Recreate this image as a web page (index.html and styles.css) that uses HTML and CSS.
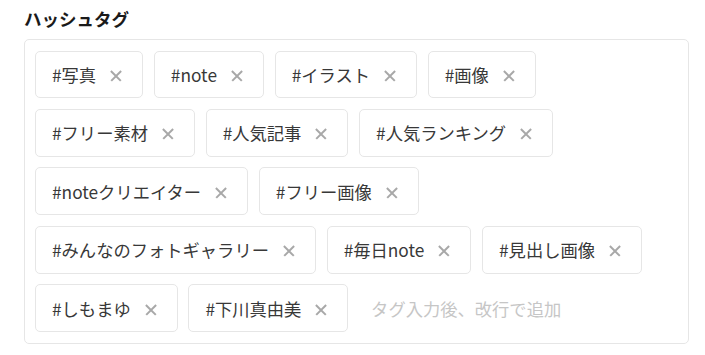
FILE: index.html
```html
<!DOCTYPE html>
<html lang="ja">
<head>
<meta charset="utf-8">
<link rel="stylesheet" href="styles.css">
</head>
<body>
<section class="field">
  <h2 class="field-title">ハッシュタグ</h2>
  <div class="tag-box">
    <span class="tag">#写真<span class="tag-x"></span></span>
    <span class="tag">#note<span class="tag-x"></span></span>
    <span class="tag">#イラスト<span class="tag-x"></span></span>
    <span class="tag">#画像<span class="tag-x"></span></span>
    <span class="tag">#フリー素材<span class="tag-x"></span></span>
    <span class="tag">#人気記事<span class="tag-x"></span></span>
    <span class="tag">#人気ランキング<span class="tag-x"></span></span>
    <span class="tag">#noteクリエイター<span class="tag-x"></span></span>
    <span class="tag">#フリー画像<span class="tag-x"></span></span>
    <span class="tag">#みんなのフォトギャラリー<span class="tag-x"></span></span>
    <span class="tag">#毎日note<span class="tag-x"></span></span>
    <span class="tag">#見出し画像<span class="tag-x"></span></span>
    <span class="tag">#しもまゆ<span class="tag-x"></span></span>
    <span class="tag">#下川真由美<span class="tag-x"></span></span>
    <input class="tag-input" type="text" placeholder="タグ入力後、改行で追加">
  </div>
</section>
</body>
</html>
```

FILE: styles.css
```css
html, body {
  margin: 0;
  padding: 0;
  background: #ffffff;
}
body {
  font-family: "Noto Sans CJK JP", "Noto Sans", sans-serif;
  color: #222;
}
.field {
  padding: 6px 17px 0 24px;
}
.field-title {
  margin: 0;
  font-size: 17.5px;
  font-weight: 700;
  line-height: 26px;
  color: #1a1a1a;
  height: 33px;
}
.tag-box {
  box-sizing: border-box;
  width: 664.5px;
  border: 1px solid #e6e6e6;
  border-radius: 5px;
  padding: 10.5px 10px;
  display: flex;
  flex-wrap: wrap;
  gap: 10.7px 10.7px;
}
.tag {
  box-sizing: border-box;
  height: 47.8px;
  display: inline-flex;
  align-items: center;
  padding: 0 20px 0 16px;
  border: 1px solid #e6e6e6;
  border-radius: 5px;
  font-size: 17.3px;
  color: #383838;
  white-space: nowrap;
}
.tag-x {
  position: relative;
  display: inline-block;
  width: 12px;
  height: 12px;
  margin-left: 14px;
  margin-top: 2px;
}
.tag-x::before,
.tag-x::after {
  content: "";
  position: absolute;
  left: -1px;
  top: 5.25px;
  width: 14px;
  height: 1.5px;
  background: #a8a8a8;
  transform: rotate(45deg);
}
.tag-x::after {
  transform: rotate(-45deg);
}
.tag-input {
  flex: 1;
  min-width: 100px;
  height: 47.8px;
  border: none;
  outline: none;
  padding: 0 12px;
  font-family: inherit;
  font-size: 17.3px;
  color: #333;
  background: transparent;
}
.tag-input::placeholder {
  color: #c6c6c6;
}
```
